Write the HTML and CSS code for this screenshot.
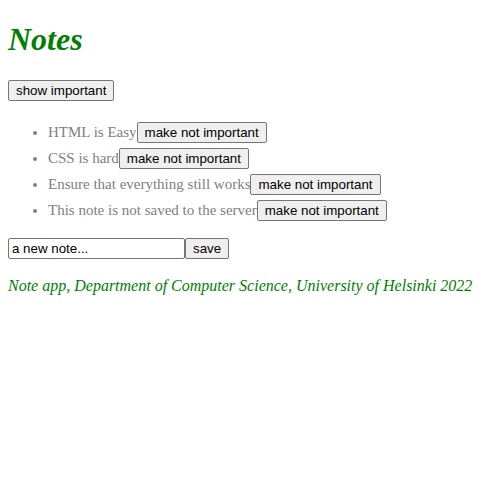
FILE: index.html
```html
<!DOCTYPE html>
<html>
<head>
<meta charset="utf-8">
<link rel="stylesheet" href="styles.css">
<title>Notes</title>
</head>
<body>
<div class="app">
  <h1 class="title">Notes</h1>
  <div class="filter">
    <button class="btn">show important</button>
  </div>
  <ul class="notes">
    <li class="note">HTML is Easy<button class="btn">make not important</button></li>
    <li class="note">CSS is hard<button class="btn">make not important</button></li>
    <li class="note">Ensure that everything still works<button class="btn">make not important</button></li>
    <li class="note">This note is not saved to the server<button class="btn">make not important</button></li>
  </ul>
  <form class="new-note">
    <input class="note-input" value="a new note..."><button class="btn" type="submit">save</button>
  </form>
  <div class="footer">
    <br>
    <em>Note app, Department of Computer Science, University of Helsinki 2022</em>
  </div>
</div>
</body>
</html>
```
FILE: styles.css
```css
body {
  margin: 0;
  font-family: "Liberation Serif", "Times New Roman", serif;
  font-size: 16px;
}
.app {
  padding: 0 8px 8px;
}
.title {
  color: green;
  font-style: italic;
  font-size: 32px;
  line-height: 37px;
  margin: 0;
  padding: 21px 0 21px;
}
.filter {
  line-height: 21px;
}
.btn {
  font-family: "Liberation Sans", Arial, sans-serif;
  font-size: 13.333px;
  line-height: 15px;
  padding: 2px 7px;
  border: 1px solid #767676;
  border-radius: 2px;
  background: #efefef;
  color: #000;
  vertical-align: baseline;
}
.notes {
  margin: 16px 0;
  padding-left: 40px;
}
.note {
  color: grey;
  padding-top: 5px;
  font-size: 15px;
  line-height: 21px;
}
.new-note {
  margin: 0;
  line-height: 21px;
}
.note-input {
  font-family: "Liberation Sans", Arial, sans-serif;
  font-size: 13.333px;
  line-height: 15px;
  box-sizing: border-box;
  width: 177px;
  height: 21px;
  padding: 2px 3px;
  border: 1px solid #767676;
  border-radius: 2px;
  margin: 0;
  color: #000;
}
.footer {
  color: green;
  font-style: italic;
  font-size: 16px;
}
```
